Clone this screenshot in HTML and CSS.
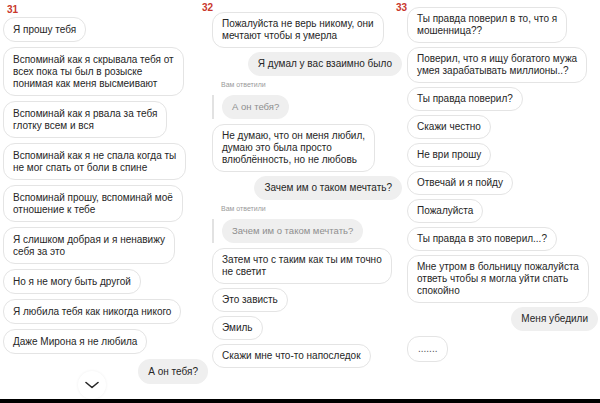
FILE: index.html
```html
<!DOCTYPE html>
<html lang="ru">
	<head>
		<meta charset="utf-8" />
		<title>Переписка</title>
		<link rel="stylesheet" href="styles.css">
	</head>
	<body>
		<div class="screen">
			<div class="col col-first">
				<div class="num">31</div>
				<div class="msg">Я прошу тебя</div>
				<div class="msg">Вспоминай как я скрывала тебя от<br />всех пока ты был в розыске<br />понимая как меня высмеивают</div>
				<div class="msg">Вспоминай как я рвала за тебя<br />глотку всем и вся</div>
				<div class="msg">Вспоминай как я не спала когда ты<br />не мог спать от боли в спине</div>
				<div class="msg">Вспоминай прошу, вспоминай моё<br />отношение к тебе</div>
				<div class="msg">Я слишком добрая и я ненавижу<br />себя за это</div>
				<div class="msg">Но я не могу быть другой</div>
				<div class="msg">Я любила тебя как никогда никого</div>
				<div class="msg">Даже Мирона я не любила</div>
				<div class="msg msg-out">А он тебя?</div>
				<button class="scroll-down" type="button">
					<svg width="14" height="8" viewBox="0 0 14 8"><path d="M1 1.5 L7 6.5 L13 1.5" fill="none" stroke="#262626" stroke-width="1.6" stroke-linecap="round" stroke-linejoin="round"/></svg>
				</button>
			</div>

			<div class="col col-side col-mid">
				<div class="num">32</div>
				<div class="msg">Пожалуйста не верь никому, они<br />мечтают чтобы я умерла</div>
				<div class="msg msg-out">Я думал у вас взаимно было</div>
				<div class="reply">
					<div class="reply-label">Вам ответили</div>
					<div class="quote"><span class="quote-text">А он тебя?</span></div>
				</div>
				<div class="msg">Не думаю, что он меня любил,<br />думаю это была просто<br />влюблённость, но не любовь</div>
				<div class="msg msg-out">Зачем им о таком мечтать?</div>
				<div class="reply">
					<div class="reply-label">Вам ответили</div>
					<div class="quote"><span class="quote-text">Зачем им о таком мечтать?</span></div>
				</div>
				<div class="msg">Затем что с таким как ты им точно<br />не светит</div>
				<div class="msg">Это зависть</div>
				<div class="msg">Эмиль</div>
				<div class="msg">Скажи мне что-то напоследок</div>
			</div>

			<div class="col col-side col-last">
				<div class="num">33</div>
				<div class="msg">Ты правда поверил в то, что я<br />мошенница??</div>
				<div class="msg">Поверил, что я ищу богатого мужа<br />умея зарабатывать миллионы..?</div>
				<div class="msg">Ты правда поверил?</div>
				<div class="msg">Скажи честно</div>
				<div class="msg">Не ври прошу</div>
				<div class="msg">Отвечай и я пойду</div>
				<div class="msg">Пожалуйста</div>
				<div class="msg">Ты правда в это поверил...?</div>
				<div class="msg">Мне утром в больницу пожалуйста<br />ответь чтобы я могла уйти спать<br />спокойно</div>
				<div class="msg msg-out">Меня убедили</div>
				<div class="msg msg-dots">.......</div>
			</div>
		</div>
		<div class="bottom-bar"></div>
	</body>
</html>
```

FILE: styles.css
```css
body {
	margin: 0;
	background: #fff;
	font-family: "Liberation Sans", Arial, sans-serif;
	color: #262626;
}
.screen {
	display: flex;
	width: 600px;
	height: 399px;
	overflow: hidden;
}
.col {
	position: relative;
	display: flex;
	flex-direction: column;
	align-items: flex-start;
	gap: 5px;
	box-sizing: border-box;
}
.col-first {
	width: 200px;
	padding: 4px 0 0 3px;
}
.col-mid {
	width: 196px;
	padding: 2px 0 0 12px;
	gap: 4px;
}
.col-last {
	width: 204px;
	padding: 2px 0 0 11px;
	gap: 4px;
}

.num {
	font-size: 10px;
	line-height: 12px;
	font-weight: bold;
	color: #c9372c;
}
.col-first .num {
	margin: 0 0 -4px 4px;
}
.col-mid .num {
	margin: 0 0 -6px -10px;
}
.col-last .num {
	margin: 0 0 -11px -11px;
}

.msg {
	font-size: 10px;
	line-height: 12px;
	padding: 5px 9px;
	border: 1px solid #e4e4e4;
	border-radius: 12px;
	background: #fff;
	white-space: nowrap;
}
.col-first .msg {
	padding: 5.5px 9px;
}
.msg-out {
	align-self: flex-end;
	background: #efefef;
	border-color: #efefef;
}
.col-first .msg-out {
	margin-right: -8px;
}
.col-mid .msg-out {
	margin-right: -6px;
}
.col-last .msg-out {
	margin-right: 2px;
}
.msg-dots {
	padding: 6px 10px;
	color: #555;
	margin-top: 1px;
}

.reply {
	display: flex;
	flex-direction: column;
	gap: 5px;
	margin-bottom: 1px;
}
.reply-label {
	font-size: 7px;
	line-height: 10px;
	color: #9a9a9a;
	margin-left: 9px;
}
.quote {
	border-left: 2px solid #e2e2e2;
	padding-left: 8px;
}
.quote-text {
	display: inline-block;
	font-size: 9.5px;
	line-height: 12px;
	padding: 6px 10px;
	border-radius: 13px;
	background: #efefef;
	color: #8e8e8e;
	white-space: nowrap;
}

.scroll-down {
	position: absolute;
	left: 78px;
	top: 371px;
	width: 28px;
	height: 28px;
	padding: 0;
	border: none;
	border-radius: 50%;
	background: #fff;
	box-shadow: 0 0 3px rgba(0, 0, 0, 0.07);
	display: flex;
	align-items: center;
	justify-content: center;
}

.bottom-bar {
	height: 4px;
	background: #000;
}
```
